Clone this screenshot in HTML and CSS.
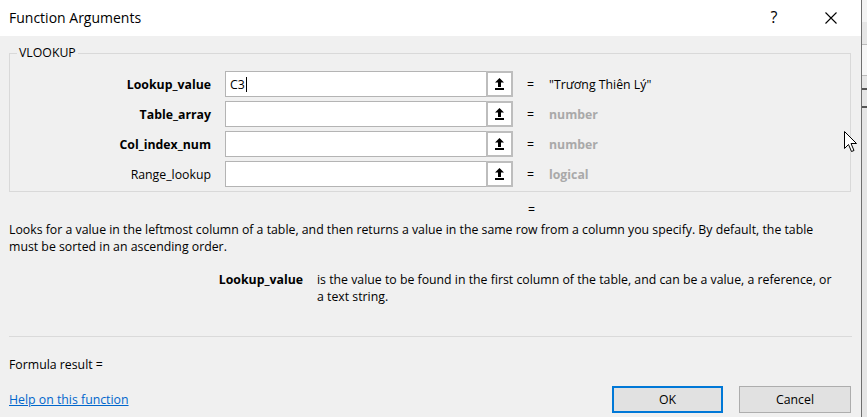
FILE: index.html
```html
<!DOCTYPE html>
<html>
<head>
<meta charset="utf-8">
<link rel="stylesheet" href="styles.css">
</head>
<body>
<div class="screen">
  <div class="dialog">
    <div class="titlebar">
      <span class="title">Function Arguments</span>
      <span class="help">?</span>
      <span class="close"><svg width="12" height="12" viewBox="0 0 12 12"><path d="M0.5 0.5 L11.5 11.5 M11.5 0.5 L0.5 11.5" stroke="#000" stroke-width="1.1" fill="none"/></svg></span>
    </div>
    <div class="body">
      <fieldset class="group">
        <legend>VLOOKUP</legend>
        <div class="args">
          <div class="arg-label strong">Lookup_value</div>
          <div class="field"><div class="input">C3<span class="caret"></span></div><div class="ref"><svg width="9" height="12" viewBox="0 0 9 12"><path d="M4.5 0 L0 4.6 H3 V9 H6 V4.6 H9 Z"/><rect x="0" y="10" width="9" height="2"/></svg></div></div>
          <div class="eq">=</div>
          <div class="val">"Trương Thiên Lý"</div>

          <div class="arg-label strong">Table_array</div>
          <div class="field"><div class="input"></div><div class="ref"><svg width="9" height="12" viewBox="0 0 9 12"><path d="M4.5 0 L0 4.6 H3 V9 H6 V4.6 H9 Z"/><rect x="0" y="10" width="9" height="2"/></svg></div></div>
          <div class="eq">=</div>
          <div class="val hint">number</div>

          <div class="arg-label strong">Col_index_num</div>
          <div class="field"><div class="input"></div><div class="ref"><svg width="9" height="12" viewBox="0 0 9 12"><path d="M4.5 0 L0 4.6 H3 V9 H6 V4.6 H9 Z"/><rect x="0" y="10" width="9" height="2"/></svg></div></div>
          <div class="eq">=</div>
          <div class="val hint">number</div>

          <div class="arg-label">Range_lookup</div>
          <div class="field"><div class="input"></div><div class="ref"><svg width="9" height="12" viewBox="0 0 9 12"><path d="M4.5 0 L0 4.6 H3 V9 H6 V4.6 H9 Z"/><rect x="0" y="10" width="9" height="2"/></svg></div></div>
          <div class="eq">=</div>
          <div class="val hint">logical</div>
        </div>
      </fieldset>
      <div class="result-eq">=</div>
      <p class="desc">Looks for a value in the leftmost column of a table, and then returns a value in the same row from a column you specify. By default, the table<br>must be sorted in an ascending order.</p>
      <div class="argdesc">
        <div class="argname">Lookup_value</div>
        <div class="argtext">is the value to be found in the first column of the table, and can be a value, a reference, or<br>a text string.</div>
      </div>
      <hr class="sep">
      <div class="formula">Formula result =</div>
      <div class="footer">
        <a class="help-link" href="#">Help on this function</a>
        <div class="buttons">
          <button class="btn ok">OK</button>
          <button class="btn">Cancel</button>
        </div>
      </div>
    </div>
  </div>
  <div class="edge">
    <div class="edge-top"></div>
    <div class="edge-box"></div>
    <div class="edge-line"></div>
    <div class="edge-line2"></div>
  </div>
  <svg class="cursor" width="14" height="22" viewBox="0 0 14 22"><path d="M0.5 0.5 L0.5 17.5 L4.5 13.5 L7.5 20.5 L10 19.5 L7 12.5 L12.5 12.5 Z" fill="#fff" stroke="#000" stroke-width="1"/></svg>
</div>
</body>
</html>
```
FILE: styles.css
```css
html, body {
  margin: 0;
  padding: 0;
}
body {
  font-family: "Open Sans", "Noto Sans", sans-serif;
  font-size: 12.3px;
  color: #000;
  background: #f0f0f0;
}
.screen {
  position: relative;
  display: flex;
  width: 867px;
  height: 417px;
  overflow: hidden;
  background: #f0f0f0;
}
.dialog {
  width: 861px;
  flex: none;
  background: #f0f0f0;
  border-right: 1px solid #6f6f6f;
}
.titlebar {
  height: 36px;
  background: #fff;
  display: flex;
  align-items: center;
  padding-left: 9px;
}
.title {
  flex: 1;
  font-size: 14px;
  margin-top: -1px;
}
.help {
  width: 46px;
  margin-right: 11px;
  text-align: center;
  font-size: 16px;
  margin-top: -2px;
}
.close {
  width: 46px;
  margin-right: 7px;
  display: flex;
  justify-content: center;
}
.body {
  padding: 0 9px 0 9px;
}
.group {
  margin: 9px 1px 0 0;
  padding: 10px 0 4px;
  border: 1px solid #d9d9d9;
  min-width: 0;
}
.group legend {
  margin-left: 7px;
  padding: 0 2px;
  line-height: 16px;
}
.args {
  display: grid;
  grid-template-columns: 201px 288px 7px 1fr;
  grid-auto-rows: 26px;
  column-gap: 14px;
  row-gap: 4px;
  align-items: center;
}
.arg-label {
  text-align: right;
}
.arg-label.strong {
  font-weight: bold;
}
.field {
  display: flex;
  height: 26px;
}
.input {
  flex: 1;
  box-sizing: border-box;
  height: 26px;
  background: #fff;
  border: 1px solid #b4b4b4;
  border-right: none;
  padding-left: 4px;
  display: flex;
  align-items: center;
}
.caret {
  display: inline-block;
  width: 1px;
  height: 15px;
  background: #000;
  margin-left: 1px;
}
.ref {
  width: 27px;
  height: 26px;
  box-sizing: border-box;
  border: 2px solid #bdbdbd;
  background: #fff;
  display: flex;
  align-items: center;
  justify-content: center;
}
.eq {
  margin-left: 0;
}
.val {
  margin-left: 1px;
}
.val.hint {
  color: #a9a9a9;
  font-weight: bold;
}
.result-eq {
  margin: 9px 0 0 519px;
  line-height: 17px;
}
.desc {
  margin: 3px 0 0;
  line-height: 17px;
}
.argdesc {
  display: flex;
  margin-top: 16px;
  line-height: 17px;
}
.argname {
  width: 294px;
  flex: none;
  text-align: right;
  font-weight: bold;
}
.argtext {
  margin-left: 14px;
}
.sep {
  margin: 31px 0 0 0;
  border: 0;
  border-top: 1px solid #dadada;
  height: 0;
}
.formula {
  margin-top: 19px;
  line-height: 17px;
}
.footer {
  display: flex;
  align-items: center;
  margin-top: 13px;
}
.help-link {
  flex: 1;
  color: #0066cc;
  text-decoration: underline;
}
.buttons {
  display: flex;
  gap: 16px;
  margin-right: 1px;
}
.btn {
  width: 112px;
  height: 27px;
  box-sizing: border-box;
  background: #e1e1e1;
  border: 1px solid #adadad;
  font-family: inherit;
  font-size: inherit;
  color: #000;
  padding: 0;
}
.btn.ok {
  width: 111px;
  border: 2px solid #0078d7;
}
.edge {
  flex: 1;
  background: #e6e6e6;
  display: flex;
  flex-direction: column;
}
.edge-top {
  height: 22px;
  background: #f3f3f3;
}
.edge-box {
  height: 30px;
  margin-top: 22px;
  background: #f6f6f6;
  border-top: 1px solid #bbb;
  border-bottom: 1px solid #bbb;
}
.edge-line {
  height: 2px;
  margin-top: 12px;
  background: #555;
}
.edge-line2 {
  height: 2px;
  margin-top: 16px;
  background: #555;
}
.cursor {
  position: absolute;
  left: 844px;
  top: 131px;
}
```
